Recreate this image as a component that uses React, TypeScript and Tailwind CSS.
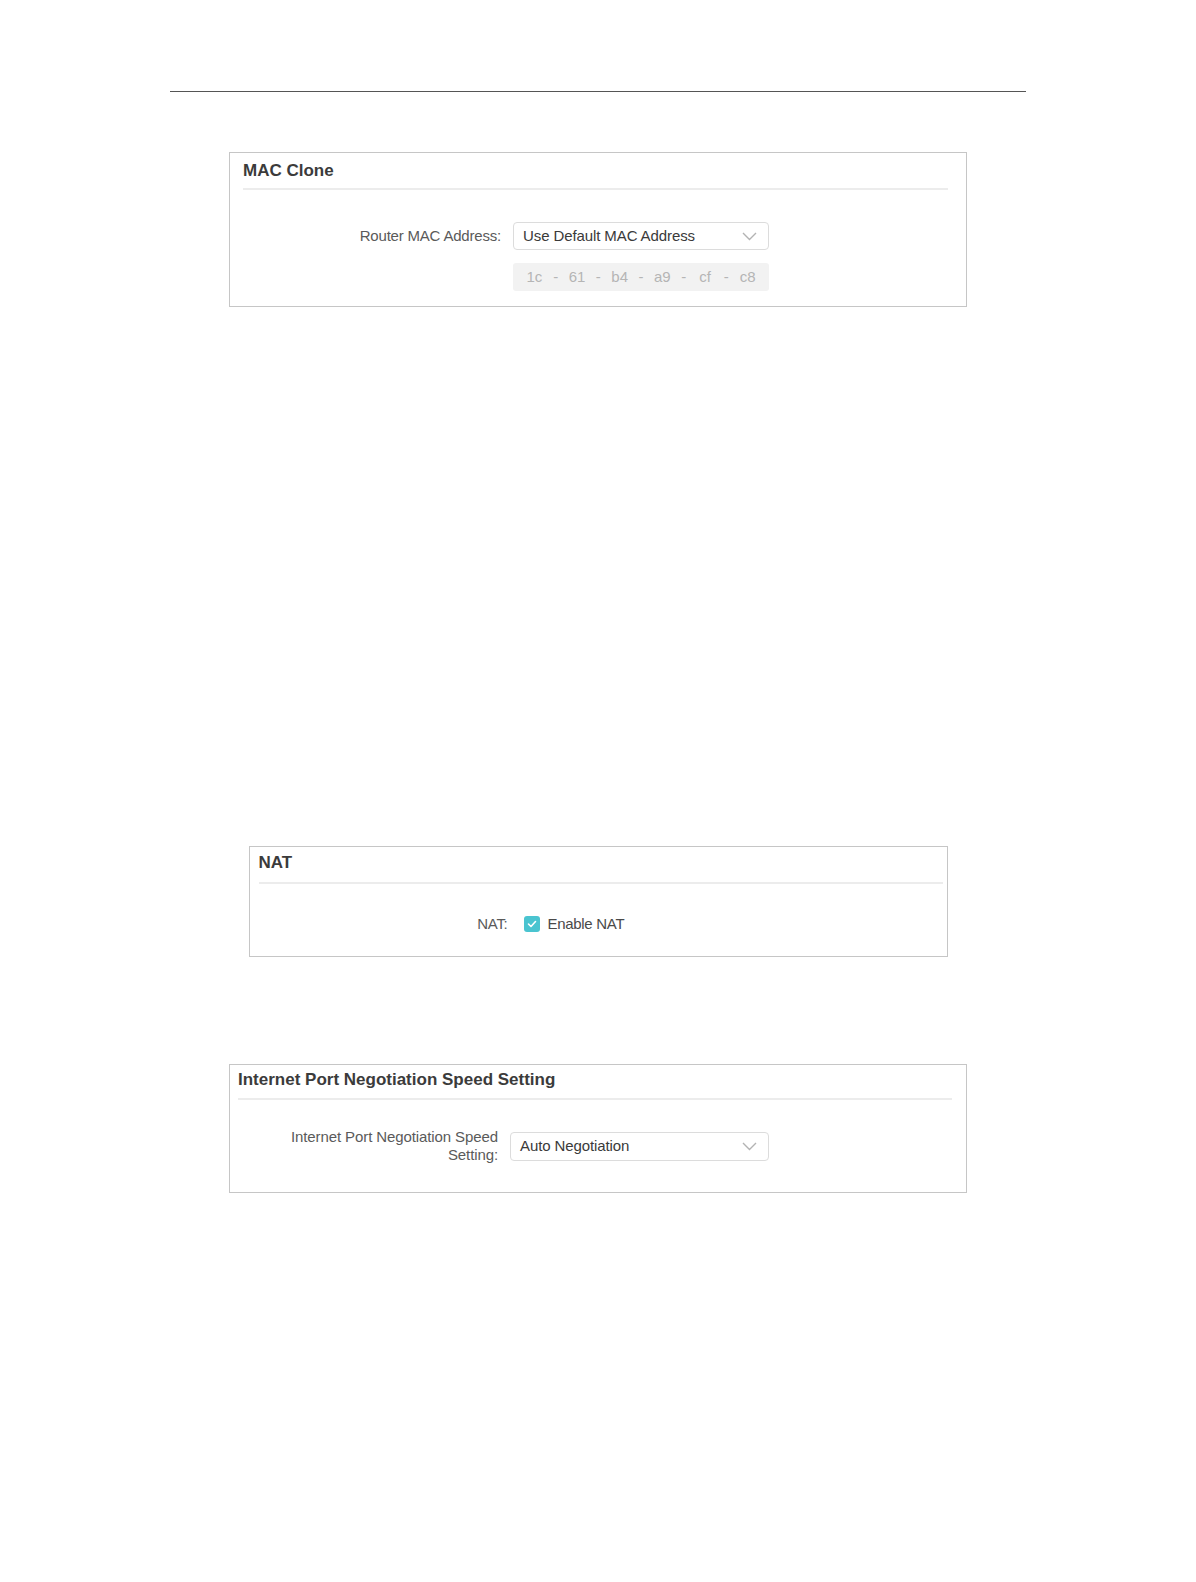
import React from 'react'

const font = { fontFamily: '"Liberation Sans", Arial, sans-serif' }

function Chevron() {
  return (
    <svg width="15" height="9" viewBox="0 0 15 9" fill="none">
      <polyline points="1,1 7.5,7.5 14,1" stroke="#b3b3b3" strokeWidth="1.4" />
    </svg>
  )
}

function Select({ value, width }: { value: string; width: string }) {
  return (
    <div
      className={`${width} flex items-center justify-between rounded-[4px] border border-[#dcdcdc] bg-white pl-[9px] pr-[11px] text-[15px] tracking-[-0.1px] text-[#3a3a3a]`}
    >
      <span>{value}</span>
      <Chevron />
    </div>
  )
}

function Title({ text }: { text: string }) {
  return <div className="h-[20px] text-[17px] font-bold leading-[20px] text-[#3b3b3b]">{text}</div>
}

const macParts = ['1c', '61', 'b4', 'a9', 'cf', 'c8']

export default function App() {
  return (
    <div className="w-[1196px] bg-white pt-[91px]" style={font}>
      <div className="mx-auto h-px w-[856px] bg-[#555555]" />

      {/* MAC Clone */}
      <div className="mx-auto mt-[60px] w-[738px] border border-[#c6c6c6] pb-[15px] pl-[13px] pr-[18px] pt-[8px]">
        <Title text="MAC Clone" />
        <div className="mt-[7px] h-[2px] bg-[#ececec]" />
        <div className="mt-[32px] grid grid-cols-[258px_256px] gap-x-[12px] gap-y-[13px]">
          <div className="flex h-[28px] items-center justify-end text-[15px] tracking-[-0.2px] text-[#5a5a5a]">
            Router MAC Address:
          </div>
          <Select value="Use Default MAC Address" width="h-[28px] w-[256px]" />
          <div />
          <div className="flex h-[28px] items-center rounded-[3px] bg-[#f2f2f2] text-[15px] text-[#b5b5b5]">
            {macParts.map((p, i) => (
              <React.Fragment key={p}>
                {i > 0 && <span className="flex w-0 justify-center">-</span>}
                <span className="flex-1 text-center">{p}</span>
              </React.Fragment>
            ))}
          </div>
        </div>
      </div>

      {/* NAT */}
      <div className="mx-auto mt-[539px] w-[699px] border border-[#c6c6c6] pb-[18px] pl-[9px] pr-[4px] pt-[6px]">
        <Title text="NAT" />
        <div className="mt-[9px] h-[2px] bg-[#ececec]" />
        <div className="mt-[26px] flex h-[28px] items-center text-[15px]">
          <div className="w-[249px] text-right tracking-[-0.3px] text-[#5a5a5a]">NAT:</div>
          <div className="ml-[16px] flex h-[16px] w-[16px] items-center justify-center rounded-[3px] bg-[#4ac4d0]">
            <svg width="10" height="8" viewBox="0 0 10 8" fill="none">
              <polyline points="1.5,4 4,6.5 8.5,1.5" stroke="white" strokeWidth="1.6" strokeLinecap="round" strokeLinejoin="round" />
            </svg>
          </div>
          <span className="ml-[8px] tracking-[-0.3px] text-[#4a4a4a]">Enable NAT</span>
        </div>
      </div>

      {/* Internet Port Negotiation Speed Setting */}
      <div className="mx-auto mt-[107px] w-[738px] border border-[#c6c6c6] pb-[28px] pl-[8px] pr-[14px] pt-[5px]">
        <Title text="Internet Port Negotiation Speed Setting" />
        <div className="mt-[8px] h-[2px] bg-[#ececec]" />
        <div className="mt-[28px] flex items-center gap-x-[12px]">
          <div className="w-[260px] text-right text-[15px] leading-[18px] tracking-[-0.1px] text-[#5a5a5a]">
            Internet Port Negotiation Speed
            <br />
            Setting:
          </div>
          <Select value="Auto Negotiation" width="h-[29px] w-[259px]" />
        </div>
      </div>
    </div>
  )
}
